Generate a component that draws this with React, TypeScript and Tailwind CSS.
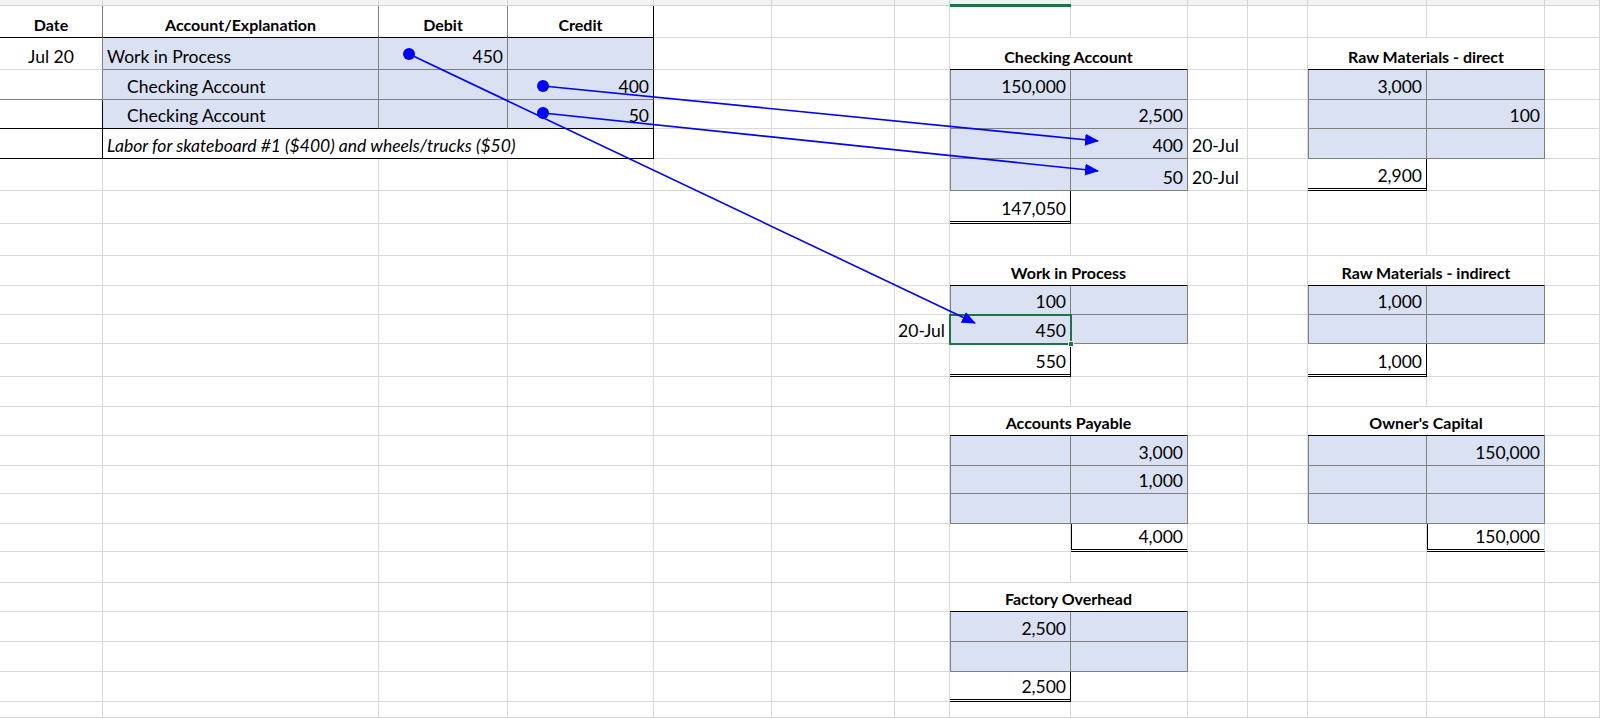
import React from "react";

const rowH = [6, 32, 32, 30, 29, 30, 32, 33, 32, 30, 29, 29, 33, 30, 29, 30, 28, 30, 28, 31, 29, 30, 30, 30, 16];

type Cell = { t?: string; a?: "l" | "r" | "c"; cls?: string; span?: number; b?: boolean; i?: boolean; indent?: boolean };
const cells: Record<string, Cell> = {};
const set = (r: number, c: number, v: Cell) => { cells[`${r},${c}`] = { ...(cells[`${r},${c}`] || {}), ...v }; };

const hdr = "border-r-[#7f7f7f] border-b-black";
set(1, 0, { t: "Date", a: "c", b: true, cls: hdr });
set(1, 1, { t: "Account/Explanation", a: "c", b: true, cls: hdr });
set(1, 2, { t: "Debit", a: "c", b: true, cls: hdr });
set(1, 3, { t: "Credit", a: "c", b: true, cls: "border-r-black border-b-black" });
set(2, 0, { t: "Jul 20", a: "c", cls: "border-r-[#7f7f7f] border-b-[#d9d9d9]" });
const sh = "bg-[#d9e1f2] border-r-[#7f7f7f] border-b-[#7f7f7f]";
set(2, 1, { t: "Work in Process", cls: sh });
set(2, 2, { t: "450", a: "r", cls: sh });
set(2, 3, { cls: "bg-[#d9e1f2] border-r-black border-b-[#7f7f7f]" });
set(3, 0, { cls: "border-r-[#7f7f7f] border-b-[#7f7f7f]" });
set(3, 1, { t: "Checking Account", indent: true, cls: sh });
set(3, 2, { cls: sh });
set(3, 3, { t: "400", a: "r", cls: "bg-[#d9e1f2] border-r-black border-b-[#7f7f7f]" });
set(4, 0, { cls: "border-r-black border-b-black" });
set(4, 1, { t: "Checking Account", indent: true, cls: "bg-[#d9e1f2] border-r-[#7f7f7f] border-b-black" });
set(4, 2, { cls: "bg-[#d9e1f2] border-r-[#7f7f7f] border-b-black" });
set(4, 3, { t: "50", a: "r", cls: "bg-[#d9e1f2] border-r-black border-b-black" });
set(5, 0, { cls: "border-r-black border-b-black" });
set(5, 1, { t: "Labor for skateboard #1 ($400) and wheels/trucks ($50)", i: true, span: 3, cls: "border-r-black border-b-black" });

function tacct(r: number, c: number, title: string, rows: [string, string][], total: [string, string], leftTag?: Record<number, string>, rightTag?: Record<number, string>) {
  set(r, c, { t: title, a: "c", b: true, span: 2, cls: "border-r-[#d9d9d9] border-b-black" });
  rows.forEach(([d, k], idx) => {
    const last = idx === rows.length - 1;
    set(r + 1 + idx, c, { t: d, a: "r", cls: "bg-[#d9e1f2] border-r-[#7f7f7f] border-b-[#7f7f7f] shadow-[inset_1px_0_0_#7f7f7f]" });
    set(r + 1 + idx, c + 1, { t: k, a: "r", cls: "bg-[#d9e1f2] border-r-[#7f7f7f] border-b-[#7f7f7f]" });
    void last;
  });
  const tr = r + 1 + rows.length;
  if (total[0]) set(tr, c, { t: total[0], a: "r", cls: "border-r-black border-b-[3px] border-b-black border-double" });
  if (total[1]) set(tr, c + 1, { t: total[1], a: "r", cls: "border-r-[#d9d9d9] border-b-[3px] border-b-black border-double shadow-[inset_1px_0_0_#000]" });
  if (leftTag) Object.entries(leftTag).forEach(([k, v]) => set(r + 1 + +k, c - 1, { t: v, a: "r" }));
  if (rightTag) Object.entries(rightTag).forEach(([k, v]) => set(r + 1 + +k, c + 2, { t: v }));
}
tacct(2, 7, "Checking Account", [["150,000", ""], ["", "2,500"], ["", "400"], ["", "50"]], ["147,050", ""], undefined, { 2: "20-Jul", 3: "20-Jul" });
tacct(9, 7, "Work in Process", [["100", ""], ["450", ""]], ["550", ""], { 1: "20-Jul" });
tacct(14, 7, "Accounts Payable", [["", "3,000"], ["", "1,000"], ["", ""]], ["", "4,000"]);
tacct(20, 7, "Factory Overhead", [["2,500", ""], ["", ""]], ["2,500", ""]);
tacct(2, 11, "Raw Materials - direct", [["3,000", ""], ["", "100"], ["", ""]], ["2,900", ""]);
tacct(9, 11, "Raw Materials - indirect", [["1,000", ""], ["", ""]], ["1,000", ""]);
tacct(14, 11, "Owner's Capital", [["", "150,000"], ["", ""], ["", ""]], ["", "150,000"]);
set(11, 7, { cls: "bg-[#d9e1f2] border-r-[#7f7f7f] border-b-[#7f7f7f] outline outline-2 outline-[#217346] -outline-offset-1 relative z-10" });

export default function App() {
  const out: React.ReactNode[] = [];
  for (let r = 0; r < rowH.length; r++) {
    for (let c = 0; c < 14; c++) {
      const k = `${r},${c}`;
      const cell = cells[k];
      let covered = false;
      for (let p = 1; p <= 3; p++) { const pc = cells[`${r},${c - p}`]; if (pc && pc.span && pc.span > p) covered = true; }
      if (covered) continue;
      const span = cell?.span || 1;
      const base = r === 0 ? "bg-[#f3f3f3] border-r border-b border-[#d4d4d4]" : cell?.cls ? "border-r border-b" : "border-r border-b border-[#d9d9d9]";
      const al = cell?.a === "r" ? "justify-end pr-1" : cell?.a === "c" ? "justify-center" : cell?.indent ? "pl-6" : "pl-1";
      out.push(
        <div key={k} style={{ gridRow: r + 1, gridColumn: `${c + 1} / span ${span}` }}
          className={`${base} ${cell?.cls ?? ""} flex items-end pb-[4px] ${al} whitespace-nowrap leading-none ${cell?.b ? "font-bold text-[16px]" : "text-[17.5px]"} ${cell?.i ? "italic" : ""}`}>
          {cell?.t}
          {k === "11,7" && <span className="absolute -right-[4px] -bottom-[4px] w-[6px] h-[6px] bg-[#217346] border border-white" />}
        </div>
      );
    }
  }
  return (
    <div className="relative w-[1600px] h-[718px] overflow-hidden bg-white text-black" style={{ fontFamily: "Lato, 'Noto Sans', sans-serif" }}>
      <div className="grid grid-cols-[103px_276px_129px_146px_118px_123px_55px_121px_117px_60px_60px_119px_118px_1fr] grid-rows-[6px_32px_32px_30px_29px_30px_32px_33px_32px_30px_29px_29px_33px_30px_29px_30px_28px_30px_28px_31px_29px_30px_30px_30px_16px]">
        {out}
      </div>
      <div className="absolute left-[950px] top-[4px] w-[121px] h-[3px] bg-[#217346]" />
      <svg className="absolute inset-0 pointer-events-none z-20" width="1600" height="718">
        <defs>
          <marker id="ah" markerWidth="14" markerHeight="12" refX="13" refY="6" orient="auto" markerUnits="userSpaceOnUse">
            <path d="M0,0 L14,6 L0,12 Z" fill="#0000ff" />
          </marker>
        </defs>
        <g stroke="#0000ff" strokeWidth="1.6" fill="none">
          <line x1="409" y1="54" x2="975" y2="323" markerEnd="url(#ah)" />
          <line x1="543" y1="86" x2="1098" y2="141" markerEnd="url(#ah)" />
          <line x1="543" y1="113" x2="1098" y2="171" markerEnd="url(#ah)" />
        </g>
        <g fill="#0000ff">
          <circle cx="409" cy="54" r="6" />
          <circle cx="543" cy="86" r="6" />
          <circle cx="543" cy="113" r="6" />
        </g>
      </svg>
    </div>
  );
}
